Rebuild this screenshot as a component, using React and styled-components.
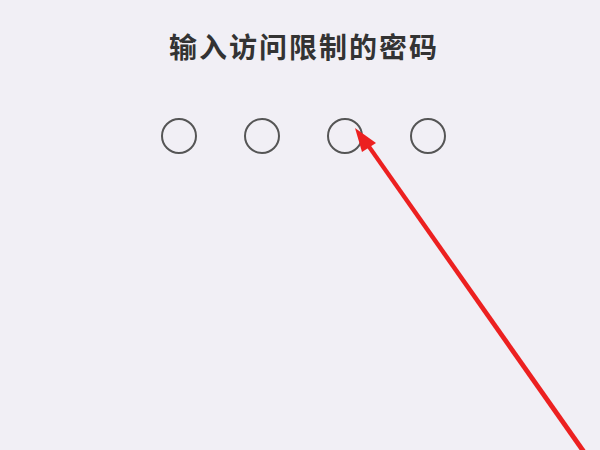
import React from "react";
import styled, { createGlobalStyle } from "styled-components";

const Global = createGlobalStyle`
  html, body {
    margin: 0;
    padding: 0;
    background: #f1eff5;
  }
  * { box-sizing: border-box; }
`;

const Page = styled.div`
  position: relative;
  width: 600px;
  height: 450px;
  overflow: hidden;
  background: #f1eff5;
  display: flex;
  flex-direction: column;
  align-items: center;
  padding-top: 28px;
  font-family: "Noto Sans CJK SC", "Noto Sans", sans-serif;
`;

const Title = styled.h1`
  margin: 0 0 0 8px;
  font-size: 28px;
  line-height: 36px;
  font-weight: 600;
  color: #333;
  letter-spacing: 2px;
`;

const Dots = styled.div`
  display: flex;
  gap: 47px;
  margin-top: 54px;
  margin-left: 6px;
`;

const Dot = styled.span`
  width: 36px;
  height: 36px;
  border-radius: 50%;
  border: 2.5px solid #555;
  background: ${(p) => (p.filled ? "#555" : "transparent")};
`;

// red arrow drawn over the screenshot
const Annotation = styled.svg`
  position: absolute;
  left: 0;
  top: 0;
  width: 600px;
  height: 450px;
  pointer-events: none;
`;

export default function App() {
  return (
    <>
      <Global />
      <Page>
        <Title>输入访问限制的密码</Title>
        <Dots>
          {[0, 1, 2, 3].map((i) => (
            <Dot key={i} />
          ))}
        </Dots>
        <Annotation viewBox="0 0 600 450">
          <polygon points="361,139 369,143 587,452 581,452" fill="#ec2020" />
          <polygon points="355,128 376,143 362,152" fill="#ec2020" />
        </Annotation>
      </Page>
    </>
  );
}
